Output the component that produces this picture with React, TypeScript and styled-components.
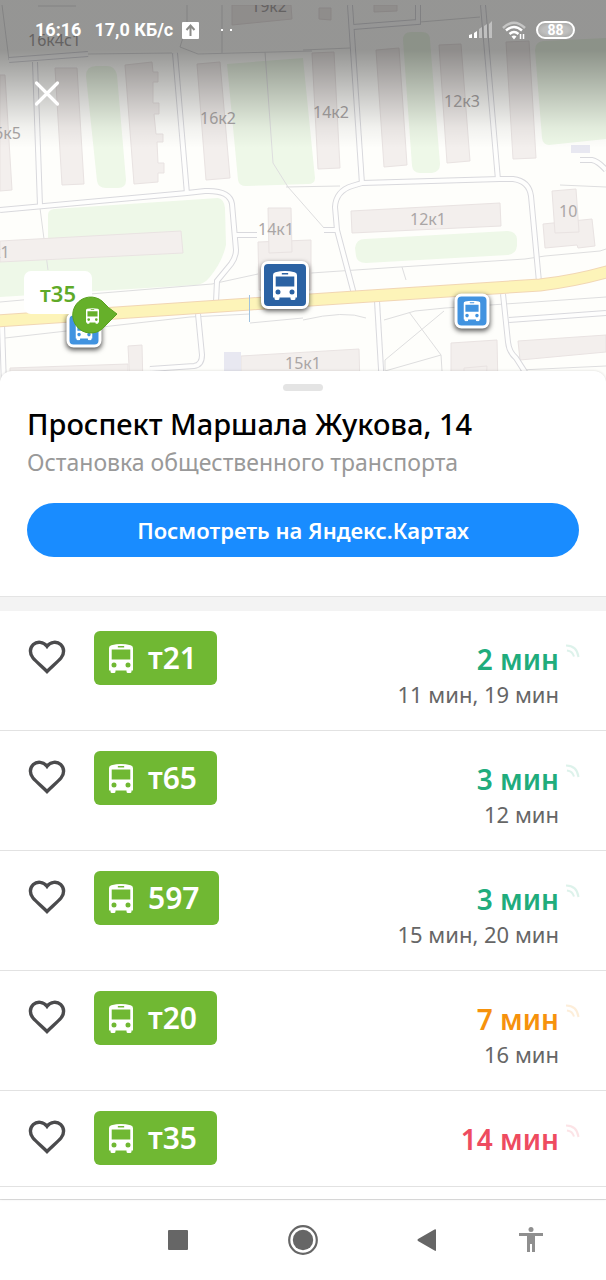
import React from "react";
import styled, { createGlobalStyle } from "styled-components";

const GlobalStyle = createGlobalStyle`
  * { box-sizing: border-box; }
  body {
    margin: 0;
    background: #fff;
    font-family: "Noto Sans", "Open Sans", sans-serif;
  }
  button { font-family: inherit; border: 0; padding: 0; background: none; cursor: pointer; }
`;

const MAP_W = 606;
const MAP_H = 386;

const Page = styled.div`
  display: flex;
  flex-direction: column;
  min-height: 100vh;
`;

const MapArea = styled.section`
  position: relative;
  overflow: hidden;
`;

const MapCanvas = styled.svg`
  display: block;
  width: 100%;
  height: auto;
`;

const Shade = styled.div`
  position: absolute;
  inset: 0 0 auto;
  height: 148px;
  background: linear-gradient(rgba(0, 0, 0, 0.41) 0 34%, rgba(0, 0, 0, 0.3) 50%, rgba(0, 0, 0, 0.16) 70%, rgba(0, 0, 0, 0.05) 86%, rgba(0, 0, 0, 0));
`;

const StatusBar = styled.header`
  position: absolute;
  inset: 0 0 auto;
  height: 60px;
  padding: 0 31px 0 35px;
  display: flex;
  align-items: center;
  justify-content: space-between;
  color: #fff;
  font: 700 18px/24px Roboto, sans-serif;
`;

const StatusGroup = styled.div`
  display: flex;
  align-items: center;
  gap: 9px;
`;

const Clock = styled.span`
  margin-right: 4px;
`;

const Battery = styled.span`
  display: flex;
  align-items: center;
  justify-content: center;
  width: 39px;
  height: 18px;
  border: 2px solid #fff;
  border-radius: 9px;
  font-size: 14px;
  line-height: 14px;
  background: radial-gradient(rgba(255, 255, 255, 0.4) 50%, rgba(255, 255, 255, 0.1));
`;

const CloseButton = styled.button`
  position: absolute;
  left: 27px;
  top: 73px;
  width: 40px;
  height: 40px;
`;

const Pin = styled.button<{ $x: number; $y: number; $size: number }>`
  position: absolute;
  left: ${(p) => (p.$x / MAP_W) * 100}%;
  top: ${(p) => (p.$y / MAP_H) * 100}%;
  width: ${(p) => p.$size}px;
  height: ${(p) => p.$size}px;
  display: flex;
  align-items: center;
  justify-content: center;
  transform: translate(-50%, -50%);
  border: 3px solid #fff;
  border-radius: 7px;
  background: ${(p) => (p.$size > 40 ? "#2b62a3" : "#4193e0")};
  box-shadow: 0 2px 5px rgba(0, 0, 0, 0.65);
`;

const VehicleLabel = styled.span`
  position: absolute;
  left: ${(24 / MAP_W) * 100}%;
  top: ${(271 / MAP_H) * 100}%;
  width: 68px;
  height: 43px;
  text-align: center;
  border-radius: 7px;
  background: #fff;
  color: #5faa28;
  font-size: 22px;
  font-weight: 600;
  line-height: 44px;
`;

const Vehicle = styled.svg`
  position: absolute;
  left: ${(72 / MAP_W) * 100}%;
  top: ${(296 / MAP_H) * 100}%;
  width: 46px;
  height: 38px;
`;

const Sheet = styled.main`
  position: relative;
  flex: 1;
  margin-top: -15px;
  border-radius: 12px 12px 0 0;
  background: #fff;
  box-shadow: 0 0 3px rgba(0, 0, 0, 0.15);
`;

const StopHeader = styled.div`
  padding: 13px 27px 39px;
`;

const Handle = styled.div`
  width: 40px;
  height: 7px;
  margin: 0 auto 12px;
  border-radius: 4px;
  background: #e4e4e4;
`;

const Title = styled.h1`
  margin: 0;
  color: #000;
  font-size: 29px;
  font-weight: 500;
  line-height: 42px;
`;

const Subtitle = styled.p`
  margin: 0 0 24px;
  color: #999;
  font-size: 23px;
  line-height: 34px;
`;

const OpenButton = styled.button`
  display: block;
  width: 100%;
  height: 54px;
  border-radius: 27px;
  background: #198cff;
  color: #fff;
  font-size: 22px;
  font-weight: 600;
  line-height: 32px;
`;

const Divider = styled.div`
  height: 15px;
  border-top: 1px solid #e4e4e4;
  background: #f3f3f3;
`;

const RouteList = styled.ul`
  margin: 0;
  padding: 0;
  list-style: none;
`;

const RouteRow = styled.li`
  display: flex;
  align-items: flex-start;
  min-height: 96px;
  padding: 20px 26px 20px 27px;
  border-bottom: 1px solid #e2e2e2;
  &:not(:last-child) { min-height: 120px; }
`;

const HeartButton = styled.button`
  display: flex;
  align-items: center;
  justify-content: center;
  width: 40px;
  height: 54px;
  margin-right: 27px;
`;

const RouteBadge = styled.button`
  display: flex;
  align-items: center;
  gap: 15px;
  height: 54px;
  padding: 0 20px 0 15px;
  border-radius: 6px;
  background: #70b833;
  color: #fff;
  font-size: 30px;
  font-weight: 600;
  line-height: 40px;
`;

const Arrival = styled.div`
  flex: 1;
  padding-top: 8px;
  text-align: right;
`;

const NextTime = styled.div<{ $color: string }>`
  color: ${(p) => p.$color};
  font-size: 28px;
  font-weight: 600;
  line-height: 40px;
`;

const LaterTimes = styled.div`
  color: #666;
  font-size: 22px;
  line-height: 30px;
`;

const Live = styled.svg`
  width: 14px;
  height: 14px;
  margin: 13px 0 0 7px;
  opacity: 0.15;
`;

const NavBar = styled.nav`
  display: grid;
  grid-template-columns: 125fr 125fr 123fr 86fr 32fr;
  height: 81px;
  padding-left: 19%;
  border-top: 1px solid #e2e2e2;
  background: #fff;
`;

const NavButton = styled.button`
  display: flex;
  align-items: center;
  justify-content: center;
`;

function BusIcon({ width, color = "#fff" }: { width: number; color?: string }) {
  return (
    <svg width={width} height={Math.round((width * 29) / 24)} viewBox="0 0 24 29" aria-hidden="true">
      <path
        fill={color}
        fillRule="evenodd"
        d="M0 4Q0 1.600 2.400 1.200Q12-1 21.600 1.200Q24 1.600 24 4V26.500H22.500V27.500Q22.500 29 21 29H19Q17.500 29 17.500 27.500V26.500H6.500V27.500Q6.500 29 5 29H3Q1.500 29 1.500 27.500V26.500H0ZM9 2Q8.300 3.500 9.500 3.500H14.500Q15.700 3.500 15 2ZM2.700 5.500V15.500H21.300V5.500ZM5 18.500A2.500 2.500 0 1 0 5 23.500A2.500 2.500 0 1 0 5 18.500ZM19 18.500A2.500 2.500 0 1 0 19 23.500A2.500 2.500 0 1 0 19 18.500Z"
      />
    </svg>
  );
}

const parks = [
  "M86 76Q86 66 96 66H107Q115 66 117 75L126 180Q126 188 118 188H106Q98 188 97 181Z",
  "M227 64L303 58L315 178Q315 184 308 184L246 186Q239 186 238 180Z",
  "M403 40Q403 32 411 32H422Q430 32 430 40L440 164Q440 172 432 173H420Q413 173 412 166Z",
  "M535 50Q535 42 543 41L606 38V139L549 145Q543 145 542 138Z",
  "M355 248Q356 239 365 239L507 231Q516 231 517 239V246Q516 254 508 255L366 263Q357 263 356 256Z",
  "M48 215Q48 210 54 209L218 198Q224 199 225 208L226 245Q222 263 209 278Q204 284 196 285L0 297V258L48 255Z",
];

const buildings = [
  "0,75 5,75 12,190 0,191",
  "55,68 77,68 84,184 62,185",
  "125,65 152,62 153,72 158,72 158,82 153,82 153,103 159,103 159,114 154,114 156,134 163,134 163,142 157,142 158,163 164,163 164,173 158,173 158,182 134,184",
  "197,64 220,62 230,178 206,180",
  "232,5 291,5 292,19 232,25",
  "312,53 334,52 340,168 318,169",
  "376,50 399,48 407,165 384,167",
  "439,45 461,44 470,161 447,163",
  "506,42 529,41 536,158 513,159",
  "319,8 331,8 331,20 319,19",
  "374,5 397,5 397,11 374,12",
  "0,241 181,231 183,253 0,262",
  "258,242 311,240 311,290 259,290",
  "268,208 291,208 292,252 269,253",
  "351,211 500,203 501,226 352,233",
  "543,224 592,219 595,246 578,248 577,245 545,248",
  "552,191 576,189 579,232 555,233",
  "241,356 359,349 360,386 241,386",
  "451,343 497,340 498,386 451,386",
  "464,368 487,366 486,386 464,386",
  "518,341 606,335 606,352 520,360",
  "128,346 142,345 143,386 130,386",
  "10,368 128,364 128,386 10,386",
];

const streets = [
  "M9 60L88 54",
  "M35 62L40 206",
  "M175 53L187 194",
  "M0 210L187 193L205 191Q230 190 232 204L236 250Q236 257 231 264L217 281L216 302",
  "M236 235H257",
  "M350 5L362 184",
  "M353 27L418 22V5",
  "M483 5L498 180",
  "M354 294L337 230L335 207Q336 191 352 186L362 183L500 179L513 179Q529 181 531 196L539 282",
  "M324 230H337",
  "M377 301L382 386",
  "M503 294L508 342Q509 352 516 358L534 386",
  "M509 320L606 313",
  "M198 314L202 355Q202 365 194 366L150 369",
  "M2 325L4 386",
  "M580 160H592Q598 161 606 170",
];

const footpaths =
  "M2 5L9 60M38 6H76M88 54L172 53M187 5L187 25L180 47L198 54L312 51M222 5V53M303 50L350 48M420 22L480 17M265 52L273 163L288 187L324 228M40 208L48 270M0 302L90 294L212 284L258 274M5 338L190 317L250 314M250 323L303 318M311 273L400 267L525 259L545 256L600 251L606 249M402 267L406 280M303 320Q345 310 366 318M384 320L415 311L445 308L520 303L606 297M409 312L441 355L442 371M444 311L385 360L385 371L441 355M520 370L606 366M286 187L340 186M560 185L606 187";

const labels: [string, number, number, number][] = [
  ["19к2", 251, 12, 16],
  ["16к4с1", 28, 46, 16],
  ["16к2", 200, 124, 16],
  ["14к2", 313, 118, 16],
  ["12к3", 444, 107, 16],
  ["6к5", -6, 139, 16],
  ["к1", -8, 258, 16],
  ["14к1", 258, 235, 16],
  ["12к1", 410, 225, 16],
  ["10", 559, 217, 16],
  ["15к1", 285, 369, 16],
];

function StreetMap() {
  return (
    <MapCanvas viewBox={`0 0 ${MAP_W} ${MAP_H}`} role="img" aria-label="Карта">
      <rect width={MAP_W} height={MAP_H} fill="#fefefb" />
      <clipPath id="visible"><rect y="5" width={MAP_W} height={MAP_H} /></clipPath>
      <g clipPath="url(#visible)" fill="none">
        {parks.map((d) => <path key={d} d={d} fill="#eef8e8" />)}
        <path d={footpaths} stroke="#dededf" />
        {buildings.map((p) => <polygon key={p} points={p} fill="#f3efed" stroke="#e9e3e2" />)}
        <path d="M571 145H590V153H571ZM224 352H241V386H224Z" fill="#e8e8f1" />
        {streets.map((d) => <path key={d} d={d} stroke="#d9d9dd" strokeWidth="6" />)}
        {streets.map((d) => <path key={d} d={d} stroke="#fefefd" strokeWidth="4" />)}
        <path d="M-5 321L250 304L355 297L540 285Q575 281 610 271" stroke="#f1d6b4" strokeWidth="13" />
        <path d="M-5 321L250 304L355 297L540 285Q575 281 610 271" stroke="#fdf4b9" strokeWidth="11" />
        <path d="M249.500 295V322" stroke="#9fc3e0" />
        <g fill="#aaa6a6" fontFamily="'Noto Sans', sans-serif">
          {labels.map(([text, x, y, size]) => <text key={text + x} x={x} y={y} fontSize={size}>{text}</text>)}
        </g>
      </g>
    </MapCanvas>
  );
}

const GREEN = "#20ac7c";
const ORANGE = "#f6920c";
const RED = "#ee4b60";

const routes = [
  { name: "т21", next: "2 мин", later: "11 мин, 19 мин", color: GREEN },
  { name: "т65", next: "3 мин", later: "12 мин", color: GREEN },
  { name: "597", next: "3 мин", later: "15 мин, 20 мин", color: GREEN },
  { name: "т20", next: "7 мин", later: "16 мин", color: ORANGE },
  { name: "т35", next: "14 мин", later: "", color: RED },
];

export default function App() {
  return (
    <Page>
      <GlobalStyle />
      <MapArea>
        <StreetMap />
        <Shade />
        <StatusBar>
          <StatusGroup>
            <Clock>16:16</Clock>
            <span>17,0 КБ/с</span>
            <svg width="17" height="17" viewBox="0 0 17 17" aria-hidden="true">
              <rect width="17" height="17" rx="1" fill="#fff" />
              <path d="M8.500 14V4M4.500 8L8.500 3.500L12.500 8" fill="none" stroke="#8c8c89" strokeWidth="2" />
            </svg>
            <svg width="32" height="17" viewBox="0 0 32 17" aria-hidden="true">
              <path d="M13 7h2v2h-2zM22 7h2v2h-2z" fill="#fff" />
            </svg>
          </StatusGroup>
          <StatusGroup>
            <svg width="25" height="18" viewBox="0 0 25 18" aria-hidden="true">
              <path d="M1 14L4 13V17H1ZM6 12L9 10V17H6Z" fill="#fff" />
              <path d="M11 8L14 6V17H11ZM16 5L19 3V17H16ZM21 3L24 0V17H21Z" fill="#fff" fillOpacity="0.4" />
            </svg>
            <svg width="25" height="19" viewBox="0 0 25 19" aria-hidden="true" fill="none" stroke="#fff" strokeWidth="2.500">
              <path d="M1 7Q12-3.500 23 7" strokeOpacity="0.45" />
              <path d="M4 9.500Q12 2.500 20 9.500M7.500 13Q12 9 16.500 13" />
              <path d="M9.500 15.500Q12 13.500 14.500 15.500L12 18.500Z" fill="#fff" stroke="none" />
              <path d="M18.500 18V13M21.500 13V18" strokeWidth="1.500" />
            </svg>
            <Battery>88</Battery>
          </StatusGroup>
        </StatusBar>
        <CloseButton aria-label="Закрыть">
          <svg width="40" height="40" viewBox="0 0 40 40" aria-hidden="true">
            <path d="M9.500 10L30.500 31M30.500 10L9.500 31" stroke="#fff" strokeWidth="3.200" strokeLinecap="round" />
          </svg>
        </CloseButton>
        <Pin $x={84} $y={330} $size={35} aria-label="Остановка"><BusIcon width={17} /></Pin>
        <Pin $x={285} $y={285} $size={48} aria-label="Проспект Маршала Жукова, 14"><BusIcon width={24} /></Pin>
        <Pin $x={472} $y={311} $size={35} aria-label="Остановка"><BusIcon width={17} /></Pin>
        <VehicleLabel>т35</VehicleLabel>
        <Vehicle viewBox="0 0 46 38" aria-hidden="true">
          <path d="M45 18L33 30A18 18 0 1 1 30 5Q36 12 45 18Z" fill="#66b02a" stroke="#58a01f" />
          <g transform="translate(14 12)">
            <BusIcon width={13} />
          </g>
        </Vehicle>
      </MapArea>
      <Sheet>
        <StopHeader>
          <Handle />
          <Title>Проспект Маршала Жукова, 14</Title>
          <Subtitle>Остановка общественного транспорта</Subtitle>
          <OpenButton>Посмотреть на Яндекс.Картах</OpenButton>
        </StopHeader>
        <Divider />
        <RouteList>
          {routes.map((r) => (
            <RouteRow key={r.name}>
              <HeartButton aria-label={`В избранное: ${r.name}`}>
                <svg width="40" height="36" viewBox="0 0 40 36" fill="none" stroke="#4b4b4d" strokeWidth="3.400" aria-hidden="true">
                  <path d="M20 6.300C16.500 1.500 10 1.200 6.300 4.500C2.500 8 2.500 14 6 18C9.500 22 15 26.500 20 31.500C25 26.500 30.500 22 34 18C37.500 14 37.500 8 33.700 4.500C30 1.200 23.500 1.500 20 6.300Z" />
                </svg>
              </HeartButton>
              <RouteBadge>
                <BusIcon width={24} />
                {r.name}
              </RouteBadge>
              <Arrival>
                <NextTime $color={r.color}>{r.next}</NextTime>
                {r.later && <LaterTimes>{r.later}</LaterTimes>}
              </Arrival>
              <Live viewBox="0 0 14 14" fill="none" stroke={r.color} strokeWidth="2" aria-hidden="true">
                <path d="M0 1.500Q11 1.500 12.500 13M1 6.500Q6.500 7 8 12.500" />
              </Live>
            </RouteRow>
          ))}
        </RouteList>
      </Sheet>
      <NavBar aria-label="Системная навигация">
        <NavButton aria-label="Недавние">
          <svg width="20" height="20" viewBox="0 0 20 20"><rect width="20" height="20" rx="1" fill="#666" /></svg>
        </NavButton>
        <NavButton aria-label="Домой">
          <svg width="30" height="30" viewBox="0 0 30 30">
            <circle cx="15" cy="15" r="13.800" fill="none" stroke="#666" strokeWidth="2.200" />
            <circle cx="15" cy="15" r="10.200" fill="#666" />
          </svg>
        </NavButton>
        <NavButton aria-label="Назад">
          <svg width="20" height="22" viewBox="0 0 20 22"><path d="M19 1V21Q19 22.500 17.500 21.500L1 12Q0 11 1 10L17.500 .5Q19 0 19 1Z" fill="#666" /></svg>
        </NavButton>
        <NavButton aria-label="Специальные возможности">
          <svg width="24" height="26" viewBox="0 0 24 26" fill="#8f8f8f">
            <circle cx="12" cy="2.500" r="2.500" />
            <path d="M0 6H24V9H16V25H13V17H11V25H8V9H0Z" />
          </svg>
        </NavButton>
      </NavBar>
    </Page>
  );
}
